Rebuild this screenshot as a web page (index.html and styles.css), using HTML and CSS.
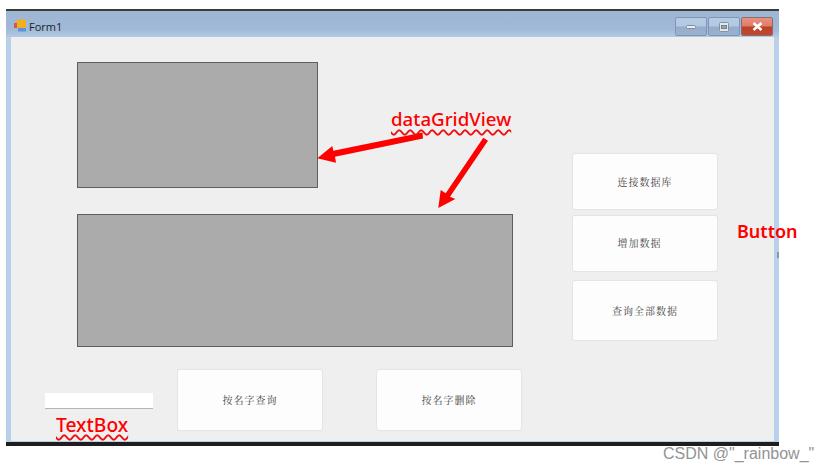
FILE: index.html
```html
<!DOCTYPE html>
<html lang="zh">
<head>
<meta charset="utf-8">
<title>Form1</title>
<link rel="stylesheet" href="styles.css">
</head>
<body>
<div class="stage">
  <div class="window">
    <div class="titlebar">
      <div class="title">
        <svg class="form-icon" width="13" height="13" viewBox="0 0 13 13">
          <rect x="0" y="4" width="4" height="5" fill="#d9534f"/>
          <rect x="3" y="0.500" width="9" height="8.500" fill="#f2b01e"/>
          <rect x="4" y="9" width="8" height="3.500" fill="#5b93dc"/>
        </svg>
        <span>Form1</span>
      </div>
      <div class="controls">
        <div class="ctl">
          <svg width="10" height="4" viewBox="0 0 10 4"><rect x="0.500" y="0.500" width="9" height="3" rx="1" fill="#eeeeee" stroke="#7d8aa0"/></svg>
        </div>
        <div class="ctl">
          <svg width="10" height="10" viewBox="0 0 10 10"><rect x="0.500" y="0.500" width="9" height="9" rx="1" fill="#e6e6e6" stroke="#8592a6"/><rect x="2.500" y="3.500" width="5" height="3" fill="#8fa6c2" stroke="#6f7f96"/></svg>
        </div>
        <div class="ctl ctl-close">
          <svg width="11" height="9" viewBox="0 0 11 9"><path d="M1.500 1l8 7M9.500 1l-8 7" stroke="#fff" stroke-width="2.600"/></svg>
        </div>
      </div>
    </div>
    <div class="client">
      <div class="grid grid-a"></div>
      <div class="grid grid-b"></div>
      <div class="btn btn-connect">连接数据库</div>
      <div class="btn btn-add">增加数据</div>
      <div class="btn btn-all">查询全部数据</div>
      <div class="btn btn-find">按名字查询</div>
      <div class="btn btn-del">按名字删除</div>
      <div class="textbox"></div>
    </div>
  </div>
  <svg class="arrows" width="830" height="471" viewBox="0 0 830 471">
    <path d="M422.500 132.500L423 138.500L335 156.700L336 162.700L317.300 158.300L332.300 146L333.300 150.700Z" fill="#fe0000"/>
    <path d="M483.300 137.700L488 140.700L450 196.700L455.300 199L438.300 208L440.700 190L445.700 193.300Z" fill="#fe0000"/>
  </svg>
  <span class="note note-grid">dataGridView</span>
  <span class="note note-box">TextBox</span>
  <span class="note note-btn">Button</span>
  <span class="speck"></span>
  <span class="watermark">CSDN @"_rainbow_"</span>
</div>
</body>
</html>
```

FILE: styles.css
```css
* { box-sizing: border-box; }
html, body { margin: 0; background: #fff; }
.stage {
  position: relative;
  width: 830px;
  height: 471px;
  overflow: hidden;
  padding: 9px 0 0 6px;
}
.window {
  width: 773px;
  height: 437px;
  display: flex;
  flex-direction: column;
  border-top: 2px solid #3a3a3a;
  border-bottom: 4px solid #1e1e1e;
  background: #b8d0ea;
  padding: 0 5px 1px;
}
.titlebar {
  height: 26px;
  margin: 0 -5px;
  padding: 6px 6px 0 8px;
  display: flex;
  justify-content: space-between;
  align-items: flex-start;
  background: linear-gradient(#9cb6d3 0%, #a0b9d6 70%, #b3cae3 100%);
}
.title {
  display: flex;
  align-items: center;
  gap: 2px;
  font: 11px "Open Sans", "Liberation Sans", sans-serif;
  color: #1a1f28;
  height: 18px;
}
.form-icon { margin-top: -1px; }
.controls { display: flex; gap: 1px; }
.ctl {
  width: 32px;
  height: 19px;
  display: flex;
  align-items: center;
  justify-content: center;
  border: 1px solid #8095b4;
  border-radius: 2px;
  background: linear-gradient(#b5cce5 0%, #b2c9e3 48%, #95adca 52%, #9ab2cf 100%);
}
.ctl-close {
  border-color: #8f6a72;
  background: linear-gradient(#e8927f 0%, #de7c69 48%, #bb4028 52%, #bf4a30 100%);
}
.client {
  position: relative;
  flex: 1;
  background: #efefef;
}
.grid {
  position: absolute;
  background: #ababab;
  border: 1px solid #5e5e5e;
}
.grid-a { left: 66px; top: 25px; width: 241px; height: 126px; }
.grid-b { left: 66px; top: 177px; width: 436px; height: 133px; }
.btn {
  position: absolute;
  display: flex;
  align-items: center;
  justify-content: center;
  padding-bottom: 2px;
  background: #fdfdfd;
  border-radius: 2px;
  box-shadow: 0 0 1px 1px #e4e4e4;
  font: 10px "Noto Serif CJK SC", "Noto Sans CJK SC", sans-serif;
  letter-spacing: 1px;
  color: #444;
}
.btn-connect { left: 562px; top: 117px; width: 144px; height: 55px; padding-bottom: 1px; }
.btn-add { left: 562px; top: 179px; width: 144px; height: 55px; padding-right: 11px; }
.btn-all { left: 562px; top: 244px; width: 144px; height: 59px; padding-bottom: 1px; }
.btn-find { left: 167px; top: 333px; width: 144px; height: 60px; }
.btn-del { left: 366px; top: 333px; width: 144px; height: 60px; }
.textbox {
  position: absolute;
  left: 34px;
  top: 356px;
  width: 108px;
  height: 16px;
  background: #fff;
  border-bottom: 1px solid #b5b5b5;
}
.arrows { position: absolute; left: 0; top: 0; }
.note {
  position: absolute;
  font-family: "Noto Sans", sans-serif;
  font-weight: 500;
  color: #fe0000;
  white-space: nowrap;
}
.note-grid {
  left: 391px;
  top: 105px;
  font-size: 18.700px;
  line-height: 28px;
  text-decoration: underline wavy #f01010 1.500px;
  text-underline-offset: 3px;
}
.note-box {
  left: 56px;
  top: 411px;
  font-size: 19.200px;
  line-height: 28px;
  text-decoration: underline wavy #f01010 1.500px;
  text-underline-offset: 2px;
}
.note-btn {
  left: 737px;
  top: 217px;
  font-size: 18px;
  font-weight: 600;
  line-height: 28px;
}
.speck {
  position: absolute;
  left: 777px;
  top: 252px;
  width: 2px;
  height: 6px;
  background: #8f979f;
}
.watermark {
  position: absolute;
  left: 663px;
  top: 444px;
  font: 16px/20px "Liberation Sans", sans-serif;
  color: #939393;
  white-space: nowrap;
}
```
